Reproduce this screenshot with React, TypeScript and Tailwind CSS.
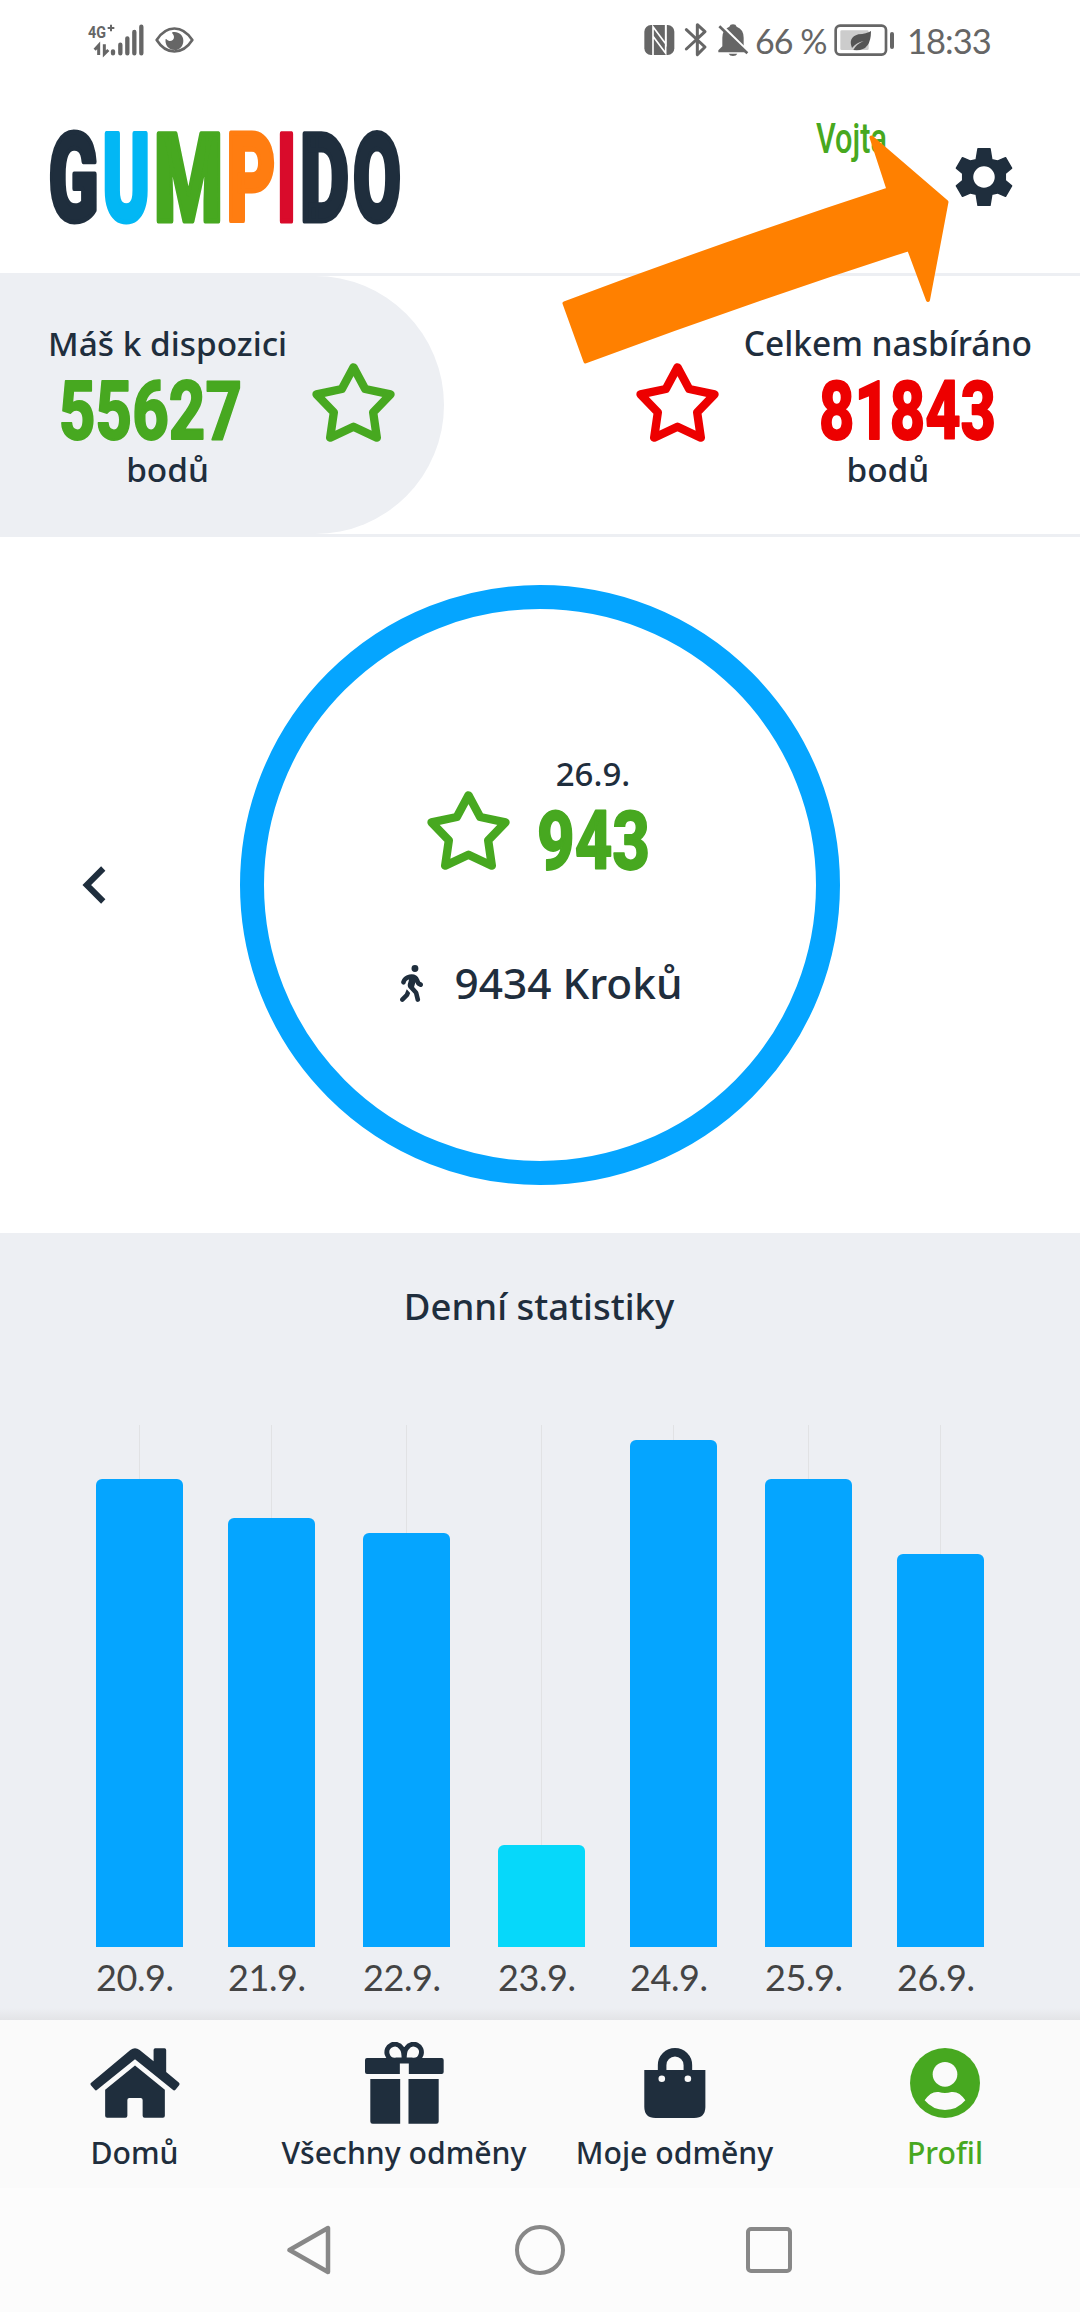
import { ChevronLeft } from "lucide-react"
import { FaPersonWalking } from "react-icons/fa6"

const days = [
  { label: "20.9.", height: "h-[468px]", color: "bg-[#05a5ff]" },
  { label: "21.9.", height: "h-[429px]", color: "bg-[#05a5ff]" },
  { label: "22.9.", height: "h-[414px]", color: "bg-[#05a5ff]" },
  { label: "23.9.", height: "h-[102px]", color: "bg-[#06d8fa]" },
  { label: "24.9.", height: "h-[507px]", color: "bg-[#05a5ff]" },
  { label: "25.9.", height: "h-[468px]", color: "bg-[#05a5ff]" },
  { label: "26.9.", height: "h-[393px]", color: "bg-[#05a5ff]" },
]

const logo = [
  { char: "G", x: -0.5, width: 50, fill: "#1f2e3d" },
  { char: "U", x: 53.5, width: 47.5, fill: "#02b7f4" },
  { char: "M", x: 105, width: 69, fill: "#47a820" },
  { char: "P", x: 177.5, width: 49, fill: "#ff7d11" },
  { char: "I", x: 228, width: 19, fill: "#d90b2b" },
  { char: "D", x: 251, width: 49, fill: "#1f2e3d" },
  { char: "O", x: 304, width: 48, fill: "#1f2e3d" },
]

function Logo() {
  return (
    <svg
      className="h-[96px] w-[354px] overflow-visible"
      viewBox="-1 -1 354 96"
      fontFamily="Roboto, sans-serif"
      fontWeight="900"
      fontSize="123"
      strokeWidth="5"
      strokeLinejoin="round"
    >
      <text>
        {logo.map((l) => (
          <tspan key={l.char} x={l.x} y="91" textLength={l.width} lengthAdjust="spacingAndGlyphs" fill={l.fill} stroke={l.fill}>
            {l.char}
          </tspan>
        ))}
      </text>
    </svg>
  )
}

function Points({ value, width, className }: { value: string; width: number; className: string }) {
  return (
    <svg className={`h-[60px] overflow-visible ${className}`} width={width} fontFamily="Roboto, sans-serif" fontWeight="800" fontSize="81">
      <text
        x="-1"
        y="58.5"
        textLength={width + 3}
        lengthAdjust="spacingAndGlyphs"
        fill="currentColor"
        stroke="currentColor"
        strokeWidth="1.8"
        strokeLinejoin="round"
      >
        {value}
      </text>
    </svg>
  )
}

function Star({ className }: { className: string }) {
  return (
    <svg className={`h-[79px] w-[83px] shrink-0 ${className}`} viewBox="0 0 248 237" fill="none" stroke="currentColor" strokeWidth="25" strokeLinejoin="round">
      <path d="M124 13 159 78 235 94 183 148 194 224 124 191 54 224 65 148 13 94 89 78Z" />
    </svg>
  )
}

function Gear() {
  return (
    <svg className="h-[60px] w-[58px]" viewBox="-29 -30 58 60" fill="#1f2e3d" stroke="#1f2e3d" strokeWidth="1.5" strokeLinejoin="round">
      <path
        fillRule="evenodd"
        d="M-6-28.3H6L7.8-17.3 13.4-15.9 21.5-19.3 27.6-8.9 21.3-3.5V3.5L27.6 8.9 21.5 19.3 13.4 15.9 7.8 17.3 6 28.3H-6L-7.8 17.3-13.4 15.9-21.5 19.3-27.6 8.9-21.3 3.5V-3.5L-27.6-8.9-21.5-19.3-13.4-15.9-7.8-17.3ZM11.5 0A11.5 11.5 0 1 0-11.5 0 11.5 11.5 0 1 0 11.5 0Z"
      />
    </svg>
  )
}

function SignalIcons() {
  return (
    <svg className="h-10 w-[110px]" viewBox="80 60 330 120" fill="#666" stroke="#666">
      <text x="83" y="114" fontFamily="Roboto, sans-serif" fontWeight="700" fontSize="50" textLength="54" lengthAdjust="spacingAndGlyphs" stroke="none">
        4G
      </text>
      <path d="M142 84H162M152 74V94" strokeWidth="6" fill="none" />
      <path d="M115 165V136L103 149M132 133V162L144 150" strokeWidth="9" fill="none" />
      <path d="M158 154V160M180 134V160M201 115V160M222 96V160M243 80V160" strokeWidth="13" strokeLinecap="round" fill="none" />
      <path d="M289 120C318 74 366 74 396 120 366 166 318 166 289 120Z" strokeWidth="8" strokeLinejoin="round" fill="none" />
      <path d="M336 97C333 99 341 104 341 111 341 119 334 124 327 123 321 122 319 116 316 117 313 132 323 150 343 150 359 150 369 137 369 122 369 106 354 93 336 97Z" stroke="none" />
    </svg>
  )
}

function StatusIcons() {
  return (
    <svg className="h-10 w-[110px]" viewBox="60 60 330 120" fill="#666">
      <rect x="70" y="75" width="90" height="90" rx="20" />
      <path d="M96 165V80L135 133V75M96 109 134 160V75" fill="none" stroke="#fff" strokeWidth="5" />
      <path d="M196 89 252 141 229 164V74L252 95 196 147" fill="none" stroke="#666" strokeWidth="9" strokeLinejoin="round" strokeLinecap="round" />
      <path d="M292 157V151L304 139V113Q304 88 325 80Q327 73 336 73T347 80Q368 88 368 113V139L380 151V157ZM323 161H349Q346 168 336 168T323 161Z" />
      <path d="M301 76 383 157" stroke="#fff" strokeWidth="9" />
      <path d="M295 79 379 160" stroke="#666" strokeWidth="8" />
    </svg>
  )
}

function Battery() {
  return (
    <svg className="h-8 w-[61px]" viewBox="643 72 183 96">
      <rect x="648" y="77" width="151" height="87" rx="13" fill="none" stroke="#666" strokeWidth="8" />
      <rect x="662" y="91" width="85" height="59" rx="4" fill="#ccc" />
      <path d="M754 93Q754 151 711 151L701 150Q710 132 732 123 710 128 697 144 684 113 716 103 741 102 754 93Z" fill="#555" />
      <rect x="811" y="96" width="12" height="51" rx="6" fill="#666" />
    </svg>
  )
}

function HomeIcon() {
  return (
    <svg className="h-[70px] w-[90px]" viewBox="90 113 270 211" fill="currentColor">
      <path d="M104 239 92 225Q89 221 93 218L211 119Q225 108 239 119L281 153V119Q281 114 286 114H314Q319 114 319 119V185L357 217Q361 221 358 225L347 239Q343 243 339 239L225 147 111 239Q107 243 104 239Z" />
      <path d="M135 239 225 166 315 239V317Q315 323 309 323H254Q248 323 248 317V270Q248 264 242 264H208Q202 264 202 270V317Q202 323 196 323H141Q135 323 135 317Z" />
    </svg>
  )
}

function GiftIcon() {
  return (
    <svg className="h-[82px] w-[79px]" viewBox="914 96 238 246" fill="currentColor">
      <path d="M1025 150H1007A24 24 0 1 1 1024 113Q1032 120 1032 150ZM1039 150H1056A24 24 0 1 0 1040 113Q1032 120 1032 150Z" fill="none" stroke="currentColor" strokeWidth="15" />
      <path d="M920 144H1145Q1151 144 1151 150V186Q1151 192 1145 192H1046V160H1019V192H920Q914 192 914 186V150Q914 144 920 144ZM930 207H1020V342H937Q930 342 930 335ZM1045 207H1136V335Q1136 342 1129 342H1045Z" />
    </svg>
  )
}

function BagIcon() {
  return (
    <svg className="h-[70px] w-[62px]" viewBox="315 113 186 212" fill="currentColor">
      <path d="M369 190V165A39 39 0 0 1 447 165V190" fill="none" stroke="currentColor" strokeWidth="26" />
      <path d="M315 180H500V291Q500 325 466 325H349Q315 325 315 291Z" />
      <circle cx="368" cy="206" r="10" fill="#fafafa" />
      <circle cx="447" cy="206" r="10" fill="#fafafa" />
    </svg>
  )
}

function ProfileIcon() {
  return (
    <svg className="size-[70px]" viewBox="1113 113 210 210">
      <circle cx="1218" cy="218" r="105" fill="currentColor" />
      <circle cx="1218" cy="192" r="37" fill="#fafafa" />
      <path d="M1157 270Q1175 242 1199 245 1218 251 1237 245 1261 242 1279 270 1255 299 1218 299T1157 270Z" fill="#fafafa" />
    </svg>
  )
}

const tabs = [
  { icon: HomeIcon, label: "Domů", color: "text-[#1f2e3d]" },
  { icon: GiftIcon, label: "Všechny odměny", color: "text-[#1f2e3d]" },
  { icon: BagIcon, label: "Moje odměny", color: "text-[#1f2e3d]" },
  { icon: ProfileIcon, label: "Profil", color: "text-[#47a820]" },
]

export default function App() {
  return (
    <div className="relative flex h-[2312px] w-[1080px] flex-col overflow-hidden bg-white font-['Noto_Sans',sans-serif] font-medium text-[#1f2e3d]">
      {/* Status bar */}
      <div className="flex h-20 items-center justify-between pr-[90px] pl-[87px] font-['Lato',sans-serif] font-normal text-[#666]">
        <SignalIcons />
        <div className="flex items-center">
          <StatusIcons />
          <span className="ml-[4px] w-[79px] pt-[2px] text-[34px] leading-10 tracking-[-1px] whitespace-nowrap">66 %</span>
          <Battery />
          <span className="ml-[12px] w-[83px] pt-[2px] text-[34.5px] leading-10 tracking-[-1px]">18:33</span>
        </div>
      </div>

      <header className="flex h-[196px] items-start justify-between border-b-[3px] border-[#edeff3] pr-[67px] pl-12">
        <div className="pt-[49px]">
          <Logo />
        </div>
        <div className="flex items-start gap-[70px]">
          <svg className="mt-[42px] h-[42px] w-[70px] overflow-visible" fontFamily="Roboto, sans-serif" fontWeight="500" fontSize="42">
            <text x="1" y="30.5" textLength="71" lengthAdjust="spacingAndGlyphs" fill="#47a820">
              Vojta
            </text>
          </svg>
          <button className="mt-[67px]">
            <Gear />
          </button>
        </div>
      </header>

      <section className="flex h-[261px] justify-between border-b-[3px] border-[#edeff3]">
        <div className="flex w-[444px] justify-between rounded-r-full bg-[#edeff3] pr-[49px] pl-[48px]">
          <div className="flex flex-col items-center pt-[47px]">
            <span className="text-[33.4px] leading-10 whitespace-nowrap">Máš k dispozici</span>
            <Points value="55627" width={180} className="mt-[17px] mr-[36px] text-[#47a820]" />
            <span className="mt-[9px] text-[33.4px] leading-10">bodů</span>
          </div>
          <Star className="mt-[87px] text-[#47a820]" />
        </div>
        <div className="flex gap-[25px] pr-[48px]">
          <Star className="mt-[87px] text-[#ed0000]" />
          <div className="flex flex-col items-center pt-[47px]">
            <span className="text-[33.5px] leading-10 whitespace-nowrap">Celkem nasbíráno</span>
            <Points value="81843" width={174} className="mt-[17px] ml-[38px] text-[#ed0000]" />
            <span className="mt-[9px] text-[33.4px] leading-10">bodů</span>
          </div>
        </div>
      </section>

      {/* Daily ring */}
      <section className="grid h-[696px] grid-cols-[240px_600px_240px] items-center">
        <button className="ml-[62px] justify-self-start">
          <ChevronLeft className="size-[66px]" strokeWidth={2.2} strokeLinecap="butt" strokeLinejoin="miter" />
        </button>
        <div className="flex size-[600px] flex-col items-center rounded-full border-[24px] border-[#05a5ff] pt-[145px]">
          <div className="flex h-[120px] gap-[28px] pr-[5px]">
            <Star className="mt-[37px] text-[#47a820]" />
            <div className="flex flex-col items-center">
              <span className="text-[33px] leading-10">26.9.</span>
              <Points value="943" width={110} className="mt-[16px] text-[#47a820]" />
            </div>
          </div>
          <div className="mt-[79px] flex items-center gap-[31px] pl-[3px]">
            <FaPersonWalking className="h-[37px] w-[23px]" />
            <span className="text-[42.4px] leading-[60px]">9434 Kroků</span>
          </div>
        </div>
      </section>

      <section className="flex h-[787px] flex-col bg-[#edeff3]">
        <h2 className="mt-[52px] pr-[2px] text-center text-[36.5px] leading-[42px] font-medium">Denní statistiky</h2>
        <div className="mt-[98px] ml-24 grid h-[522px] grid-cols-[132px_135px_135px_132px_135px_132px_87px]">
          {days.map((d) => (
            <div key={d.label} className="flex h-full w-[87px] flex-col items-center">
              <div className="w-px flex-1 bg-[#e1e2e4]" />
              <div className={`w-full rounded-t-[6px] ${d.height} ${d.color}`} />
            </div>
          ))}
        </div>
        <div className="mt-[7px] ml-24 grid grid-cols-[132px_135px_135px_132px_135px_132px_87px] font-['Lato',sans-serif] text-[36px] leading-[46px] font-normal tracking-[-0.4px] text-[#444]">
          {days.map((d) => (
            <span key={d.label}>{d.label}</span>
          ))}
        </div>
        <div className="mt-auto h-3 bg-linear-to-b from-[#edeff3] to-[#e3e4e7]" />
      </section>

      <nav className="grid h-[168px] grid-cols-[269px_270px_271px_270px] bg-[#fafafa]">
        {tabs.map((tab) => {
          const Icon = tab.icon
          return (
            <button key={tab.label} className={`flex flex-col items-center pt-[22px] ${tab.color}`}>
              <span className="flex h-[82px] items-center">
                <Icon />
              </span>
              <span className="mt-[9px] text-[30.2px] leading-[40px] whitespace-nowrap">{tab.label}</span>
            </button>
          )
        })}
      </nav>

      {/* System navigation */}
      <div className="flex h-[124px] items-center justify-between bg-[#fcfcfc] pr-[288px] pl-[286px]">
        <svg className="h-[50px] w-[45px]" viewBox="0 0 45 50" fill="none" stroke="#888" strokeWidth="4.5" strokeLinejoin="round">
          <path d="M42 3V47L3.5 25Z" />
        </svg>
        <div className="ml-[3px] size-[50px] rounded-full border-[4.5px] border-[#888]" />
        <div className="size-[46px] rounded-[5px] border-[4.5px] border-[#888]" />
      </div>

      {/* Pointer arrow over the settings button */}
      <svg className="pointer-events-none absolute top-[130px] left-[555px] h-[240px] w-[400px]" viewBox="555 130 400 240">
        <path d="M564.5 303.3Q725 243 888.5 189.5L871.5 137.5 946.5 202 928 300 909 249Q745 302 585.5 361.5Z" fill="#ff8000" stroke="#ff8000" strokeWidth="4" strokeLinejoin="round" />
      </svg>
    </div>
  )
}
